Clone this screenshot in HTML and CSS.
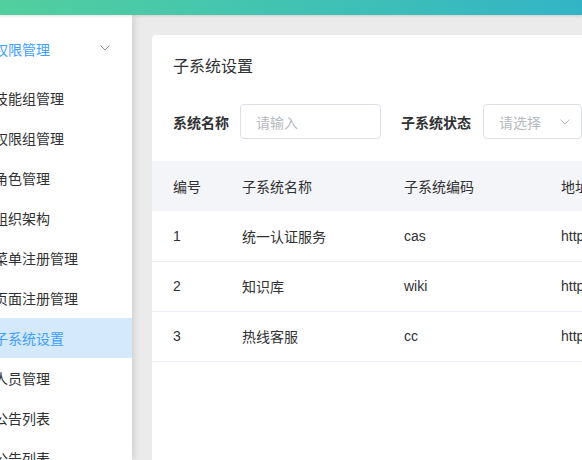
FILE: index.html
```html
<!DOCTYPE html>
<html lang="zh-CN">
<head>
<meta charset="utf-8">
<title>子系统设置</title>
<link rel="stylesheet" href="styles.css">
</head>
<body>
<div class="app">
  <header class="topbar"></header>
  <div class="main">
    <aside class="sidebar">
      <div class="submenu-title">
        <span class="label">权限管理</span>
        <svg class="chev" width="10" height="6" viewBox="0 0 10 6"><path d="M0.5 0.5 L5 5 L9.5 0.5" fill="none" stroke="#909399" stroke-width="1"/></svg>
      </div>
      <ul class="menu">
        <li class="item"><span class="label">技能组管理</span></li>
        <li class="item"><span class="label">权限组管理</span></li>
        <li class="item"><span class="label">角色管理</span></li>
        <li class="item"><span class="label">组织架构</span></li>
        <li class="item"><span class="label">菜单注册管理</span></li>
        <li class="item"><span class="label">页面注册管理</span></li>
        <li class="item active"><span class="label">子系统设置</span></li>
        <li class="item"><span class="label">人员管理</span></li>
        <li class="item"><span class="label">公告列表</span></li>
        <li class="item"><span class="label">公告列表</span></li>
      </ul>
    </aside>
    <section class="content">
      <div class="card">
        <h2 class="card-title">子系统设置</h2>
        <form class="filters">
          <div class="form-item">
            <label class="form-label">系统名称</label>
            <div class="input"><span class="placeholder">请输入</span></div>
          </div>
          <div class="form-item form-item-wide">
            <label class="form-label">子系统状态</label>
            <div class="input select"><span class="placeholder">请选择</span>
              <svg class="chev" width="10" height="6" viewBox="0 0 10 6"><path d="M0.5 0.5 L5 5 L9.5 0.5" fill="none" stroke="#b4b8bf" stroke-width="1"/></svg>
            </div>
          </div>
        </form>
        <table class="table">
          <colgroup>
            <col class="c1"><col class="c2"><col class="c3"><col class="c4">
          </colgroup>
          <thead>
            <tr><th>编号</th><th>子系统名称</th><th>子系统编码</th><th>地址</th></tr>
          </thead>
          <tbody>
            <tr><td>1</td><td>统一认证服务</td><td>cas</td><td>http</td></tr>
            <tr><td>2</td><td>知识库</td><td>wiki</td><td>http</td></tr>
            <tr><td>3</td><td>热线客服</td><td>cc</td><td>http</td></tr>
          </tbody>
        </table>
      </div>
    </section>
  </div>
</div>
</body>
</html>
```
FILE: styles.css
```css
* { box-sizing: border-box; }
html, body {
  margin: 0;
  padding: 0;
  width: 582px;
  height: 460px;
  overflow: hidden;
  font-family: "Liberation Sans", "Noto Sans CJK SC", sans-serif;
  color: #303133;
  font-size: 14px;
}
.app {
  display: flex;
  flex-direction: column;
  height: 460px;
}
.topbar {
  height: 15px;
  flex: none;
  background: linear-gradient(90deg, #52cf9e 0%, #43c4b0 45%, #33b4c6 100%);
  box-shadow: 0 1px 3px rgba(0, 0, 0, 0.12);
  position: relative;
  z-index: 3;
}
.main {
  flex: 1;
  display: flex;
  min-height: 0;
  background: #ebebeb;
}
.sidebar {
  width: 132px;
  flex: none;
  background: #fff;
  box-shadow: 2px 0 6px rgba(0, 0, 0, 0.12);
  position: relative;
  z-index: 2;
  overflow: hidden;
  padding-top: 9px;
}
.label {
  margin-left: -6px;
  white-space: nowrap;
}
.submenu-title {
  height: 50px;
  display: flex;
  align-items: center;
  justify-content: space-between;
  padding-right: 22px;
  color: #409eff;
  font-size: 14px;
}
.submenu-title .chev { margin-top: -2px; }
.menu {
  list-style: none;
  margin: 4px 0 0;
  padding: 0;
}
.item {
  height: 40px;
  display: flex;
  align-items: center;
  color: #303133;
}
.item.active {
  background: #d5e9fc;
  color: #409eff;
}
.content {
  flex: 1;
  min-width: 0;
  padding: 20px 0 0 20px;
  overflow: hidden;
}
.card {
  width: 620px;
  height: 600px;
  background: #fff;
  border-radius: 4px;
  padding-top: 21px;
}
.card-title {
  margin: 0 0 0 21px;
  font-size: 16px;
  font-weight: normal;
  line-height: 22px;
  color: #303133;
}
.filters {
  display: flex;
  align-items: center;
  margin: 26px 0 22px 21px;
}
.form-item {
  display: flex;
  align-items: center;
  margin-right: 20px;
}
.form-label {
  font-weight: 600;
  padding-right: 11px;
  color: #303133;
}
.form-item-wide .form-label {
  padding-right: 12px;
}
.input {
  width: 141px;
  height: 35px;
  border: 1px solid #dcdfe6;
  border-radius: 4px;
  display: flex;
  align-items: center;
  padding: 0 15px;
}
.select {
  width: 99px;
  justify-content: space-between;
  padding-right: 11px;
}
.placeholder {
  color: #b6b9c0;
  font-size: 14px;
}
.table {
  border-collapse: collapse;
  table-layout: fixed;
  width: 600px;
}
.c1 { width: 69px; }
.c2 { width: 162px; }
.c3 { width: 157px; }
.c4 { width: 212px; }
.table th, .table td {
  height: 50px;
  padding: 0 0 0 21px;
  text-align: left;
  font-weight: normal;
  color: #303133;
  white-space: nowrap;
  overflow: hidden;
}
.table thead th {
  background: #f4f5f9;
}
.table tbody td {
  border-bottom: 1px solid #ebeef5;
}
```
